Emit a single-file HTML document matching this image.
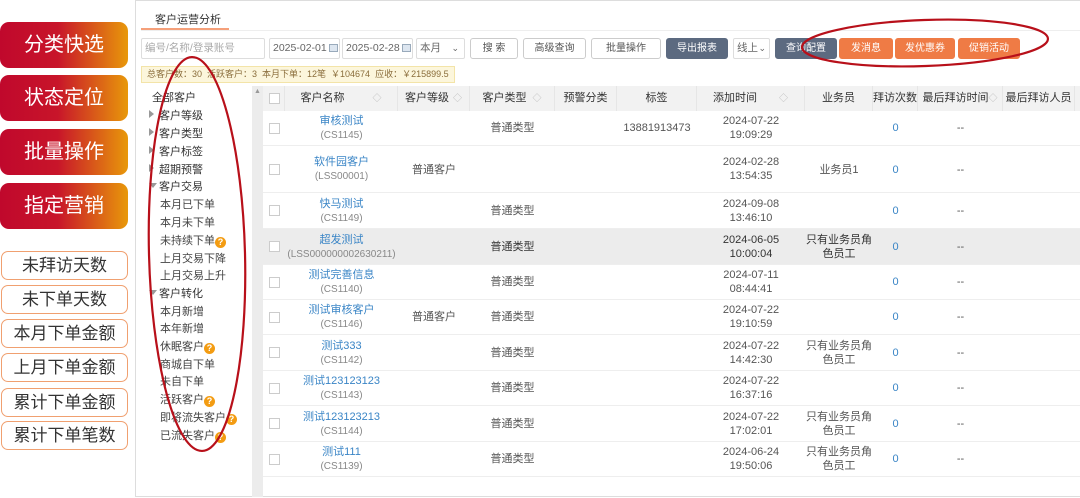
<!DOCTYPE html>
<html><head><meta charset="utf-8"><style>
*{margin:0;padding:0;box-sizing:border-box}
body{width:1080px;height:498px;background:#fff;position:relative;overflow:hidden;font-family:"Liberation Sans","Noto Sans CJK SC",sans-serif;font-size:11px;color:#555}
.a{position:absolute}
.rb{position:absolute;left:0;width:128px;height:46px;border-radius:9px;background:linear-gradient(90deg,#c0082c 0%,#c8152a 45%,#e8980a 100%);color:#fff;font-size:20px;text-align:center;line-height:46px}
.ob{position:absolute;left:1px;width:127px;height:29px;border:1px solid #f0a070;border-radius:7px;color:#333;font-size:17px;text-align:center;line-height:27px}
.inp{position:absolute;top:38px;height:21px;border:1px solid #ddd;border-radius:2px;background:#fff;color:#666;line-height:19px;padding-left:3px;white-space:nowrap;overflow:hidden;font-size:10.5px}
.btn{position:absolute;top:38px;height:21px;border:1px solid #ccc;border-radius:3px;background:#fff;color:#555;text-align:center;line-height:19px;font-size:10px;white-space:nowrap}
.dk{background:#5c6a80;color:#fff;border-color:#5c6a80}
.or{background:#ef7b45;color:#fff;border-color:#ef7b45}
.ti{position:absolute;left:160px;font-size:11px;color:#444;white-space:nowrap}
.tg{position:absolute;left:149px;font-size:11px;color:#333;white-space:nowrap}
.tg:before{content:"";position:absolute;left:0;top:3px;border-left:5px solid #999;border-top:4px solid transparent;border-bottom:4px solid transparent}
.tg.d:before{border-top:5px solid #999;border-left:4px solid transparent;border-right:4px solid transparent;border-bottom:0;top:5px}
.q{display:inline-block;width:11px;height:11px;border-radius:50%;background:#f39c12;color:#fff;font-size:9px;text-align:center;line-height:11px;font-weight:bold;vertical-align:-1px}
.row{position:absolute;left:263px;width:817px;border-bottom:1px solid #eee}
.c{position:absolute;text-align:center;line-height:14px;white-space:nowrap}
.cb{position:absolute;left:6px;width:11px;height:11px;border:1px solid #ccc;background:#fff}
.lk{color:#3a85c6}
.sm{color:#888;font-size:10px}
.h{position:absolute;top:0;height:25px;line-height:25px;text-align:center;color:#333;border-right:1px solid #e6e6e6;white-space:nowrap}
.s{display:inline-block;color:#bbb;font-size:9px;margin-left:6px}
.cal{display:inline-block;width:9px;height:8px;border:1px solid #9ab;background:#dde6f0;vertical-align:-1px;margin-left:2px}
</style></head><body>
<div class="rb" style="top:22px">分类快选</div>
<div class="rb" style="top:75px">状态定位</div>
<div class="rb" style="top:129px">批量操作</div>
<div class="rb" style="top:183px">指定营销</div>
<div class="ob" style="top:251px">未拜访天数</div>
<div class="ob" style="top:285px">未下单天数</div>
<div class="ob" style="top:319px">本月下单金额</div>
<div class="ob" style="top:353px">上月下单金额</div>
<div class="ob" style="top:388px">累计下单金额</div>
<div class="ob" style="top:421px">累计下单笔数</div>

<div class="a" style="left:135px;top:0;width:945px;height:497px;border:1px solid #ddd;border-right:0"></div>
<div class="a" style="left:155px;top:11px;font-size:11px;color:#333">客户运营分析</div>
<div class="a" style="left:141px;top:30px;width:939px;height:1px;background:#eee"></div>
<div class="a" style="left:141px;top:28px;width:88px;height:2px;background:#f5a07a"></div>

<div class="inp" style="left:141px;width:124px;color:#aaa">编号/名称/登录账号</div>
<div class="inp" style="left:269px;width:71px">2025-02-01<span class="cal"></span></div>
<div class="inp" style="left:342px;width:71px">2025-02-28<span class="cal"></span></div>
<div class="inp" style="left:416px;width:49px">本月 <span style="position:absolute;right:5px;font-size:9px">⌄</span></div>
<div class="btn" style="left:470px;width:48px">搜 索</div>
<div class="btn" style="left:523px;width:63px">高级查询</div>
<div class="btn" style="left:591px;width:70px">批量操作</div>
<div class="btn dk" style="left:666px;width:62px">导出报表</div>
<div class="inp" style="left:733px;width:37px">线上<span style="position:absolute;right:3px;font-size:9px">⌄</span></div>
<div class="btn dk" style="left:775px;width:62px">查询配置</div>
<div class="btn or" style="left:839px;width:54px">发消息</div>
<div class="btn or" style="left:895px;width:60px">发优惠券</div>
<div class="btn or" style="left:958px;width:62px">促销活动</div>

<div class="a" style="left:141px;top:66px;width:314px;height:17px;background:#fcf6dc;border:1px solid #f3e4a8;font-size:9px;color:#8a6d3b;line-height:15px;padding-left:5px;white-space:nowrap;overflow:hidden">总客户数：30&nbsp; 活跃客户：3&nbsp; 本月下单：12笔&nbsp; ￥104674&nbsp; 应收：￥215899.5</div>

<div class="a" style="left:152px;top:89px;color:#333">全部客户</div>
<div class="tg" style="top:107px"><span style="margin-left:10px">客户等级</span></div>
<div class="tg" style="top:125px"><span style="margin-left:10px">客户类型</span></div>
<div class="tg" style="top:143px"><span style="margin-left:10px">客户标签</span></div>
<div class="tg" style="top:161px"><span style="margin-left:10px">超期预警</span></div>
<div class="tg d" style="top:178px"><span style="margin-left:10px">客户交易</span></div>
<div class="ti" style="top:196px">本月已下单</div>
<div class="ti" style="top:214px">本月未下单</div>
<div class="ti" style="top:232px">未持续下单<span class="q">?</span></div>
<div class="ti" style="top:250px">上月交易下降</div>
<div class="ti" style="top:267px">上月交易上升</div>
<div class="tg d" style="top:285px"><span style="margin-left:10px">客户转化</span></div>
<div class="ti" style="top:303px">本月新增</div>
<div class="ti" style="top:320px">本年新增</div>
<div class="ti" style="top:338px">休眠客户<span class="q">?</span></div>
<div class="ti" style="top:356px">商城自下单</div>
<div class="ti" style="top:373px">未自下单</div>
<div class="ti" style="top:391px">活跃客户<span class="q">?</span></div>
<div class="ti" style="top:409px">即将流失客户<span class="q">?</span></div>
<div class="ti" style="top:427px">已流失客户<span class="q">?</span></div>

<div class="a" style="left:252px;top:86px;width:11px;height:411px;background:#ececec"></div>
<div class="a" style="left:254px;top:88px;font-size:7px;color:#999">▲</div>

<div class="a" style="left:263px;top:86px;width:817px;height:25px;background:#f2f2f2">
<div class="h" style="left:0;width:22px"><div class="cb" style="top:7px"></div></div>
<div class="h" style="left:22px;width:113px">客户名称<span class="s" style="margin-left:28px">◇</span></div>
<div class="h" style="left:135px;width:72px">客户等级<span class="s" style="margin-left:4px">◇</span></div>
<div class="h" style="left:207px;width:85px">客户类型<span class="s">◇</span></div>
<div class="h" style="left:292px;width:62px">预警分类</div>
<div class="h" style="left:354px;width:80px">标签</div>
<div class="h" style="left:434px;width:108px">添加时间<span class="s" style="margin-left:22px">◇</span></div>
<div class="h" style="left:542px;width:68px">业务员</div>
<div class="h" style="left:610px;width:45px">拜访次数</div>
<div class="h" style="left:655px;width:85px">最后拜访时间<span class="s" style="margin-left:0">◇</span></div>
<div class="h" style="left:740px;width:72px">最后拜访人员</div>
</div>

<div class="row" style="top:111px;height:35px"><div class="cb" style="top:12px"></div><div class="c lk" style="left:22px;width:113px;top:3px">审核测试<br><span class="sm">(CS1145)</span></div><div class="c" style="left:207px;width:85px;top:10px">普通类型</div><div class="c" style="left:354px;width:80px;top:10px">13881913473</div><div class="c" style="left:434px;width:108px;top:3px">2024-07-22<br>19:09:29</div><div class="c lk" style="left:610px;width:45px;top:10px">0</div><div class="c" style="left:655px;width:85px;top:10px">--</div></div>

<div class="row" style="top:146px;height:47px"><div class="cb" style="top:18px"></div><div class="c lk" style="left:22px;width:113px;top:9px">软件园客户<br><span class="sm">(LSS00001)</span></div><div class="c" style="left:135px;width:72px;top:17px">普通客户</div><div class="c" style="left:434px;width:108px;top:9px">2024-02-28<br>13:54:35</div><div class="c" style="left:542px;width:68px;top:17px">业务员1</div><div class="c lk" style="left:610px;width:45px;top:17px">0</div><div class="c" style="left:655px;width:85px;top:17px">--</div></div>

<div class="row" style="top:193px;height:36px"><div class="cb" style="top:12px"></div><div class="c lk" style="left:22px;width:113px;top:4px">快马测试<br><span class="sm">(CS1149)</span></div><div class="c" style="left:207px;width:85px;top:11px">普通类型</div><div class="c" style="left:434px;width:108px;top:4px">2024-09-08<br>13:46:10</div><div class="c lk" style="left:610px;width:45px;top:11px">0</div><div class="c" style="left:655px;width:85px;top:11px">--</div></div>

<div class="row" style="top:229px;height:36px;background:#ececec"><div class="cb" style="top:12px"></div><div class="c lk" style="left:22px;width:113px;top:4px">超发测试<br><span class="sm">(LSS000000002630211)</span></div><div class="c" style="left:207px;width:85px;top:11px;color:#333">普通类型</div><div class="c" style="left:434px;width:108px;top:4px;color:#333">2024-06-05<br>10:00:04</div><div class="c" style="left:542px;width:68px;top:4px;color:#333">只有业务员角<br>色员工</div><div class="c lk" style="left:610px;width:45px;top:11px">0</div><div class="c" style="left:655px;width:85px;top:11px">--</div></div>

<div class="row" style="top:265px;height:35px"><div class="cb" style="top:12px"></div><div class="c lk" style="left:22px;width:113px;top:3px">测试完善信息<br><span class="sm">(CS1140)</span></div><div class="c" style="left:207px;width:85px;top:10px">普通类型</div><div class="c" style="left:434px;width:108px;top:3px">2024-07-11<br>08:44:41</div><div class="c lk" style="left:610px;width:45px;top:10px">0</div><div class="c" style="left:655px;width:85px;top:10px">--</div></div>

<div class="row" style="top:300px;height:35px"><div class="cb" style="top:12px"></div><div class="c lk" style="left:22px;width:113px;top:3px">测试审核客户<br><span class="sm">(CS1146)</span></div><div class="c" style="left:135px;width:72px;top:10px">普通客户</div><div class="c" style="left:207px;width:85px;top:10px">普通类型</div><div class="c" style="left:434px;width:108px;top:3px">2024-07-22<br>19:10:59</div><div class="c lk" style="left:610px;width:45px;top:10px">0</div><div class="c" style="left:655px;width:85px;top:10px">--</div></div>

<div class="row" style="top:335px;height:36px"><div class="cb" style="top:12px"></div><div class="c lk" style="left:22px;width:113px;top:4px">测试333<br><span class="sm">(CS1142)</span></div><div class="c" style="left:207px;width:85px;top:11px">普通类型</div><div class="c" style="left:434px;width:108px;top:4px">2024-07-22<br>14:42:30</div><div class="c" style="left:542px;width:68px;top:4px">只有业务员角<br>色员工</div><div class="c lk" style="left:610px;width:45px;top:11px">0</div><div class="c" style="left:655px;width:85px;top:11px">--</div></div>

<div class="row" style="top:371px;height:35px"><div class="cb" style="top:12px"></div><div class="c lk" style="left:22px;width:113px;top:3px">测试123123123<br><span class="sm">(CS1143)</span></div><div class="c" style="left:207px;width:85px;top:10px">普通类型</div><div class="c" style="left:434px;width:108px;top:3px">2024-07-22<br>16:37:16</div><div class="c lk" style="left:610px;width:45px;top:10px">0</div><div class="c" style="left:655px;width:85px;top:10px">--</div></div>

<div class="row" style="top:406px;height:36px"><div class="cb" style="top:12px"></div><div class="c lk" style="left:22px;width:113px;top:4px">测试123123213<br><span class="sm">(CS1144)</span></div><div class="c" style="left:207px;width:85px;top:11px">普通类型</div><div class="c" style="left:434px;width:108px;top:4px">2024-07-22<br>17:02:01</div><div class="c" style="left:542px;width:68px;top:4px">只有业务员角<br>色员工</div><div class="c lk" style="left:610px;width:45px;top:11px">0</div><div class="c" style="left:655px;width:85px;top:11px">--</div></div>

<div class="row" style="top:442px;height:35px"><div class="cb" style="top:12px"></div><div class="c lk" style="left:22px;width:113px;top:3px">测试111<br><span class="sm">(CS1139)</span></div><div class="c" style="left:207px;width:85px;top:10px">普通类型</div><div class="c" style="left:434px;width:108px;top:3px">2024-06-24<br>19:50:06</div><div class="c" style="left:542px;width:68px;top:3px">只有业务员角<br>色员工</div><div class="c lk" style="left:610px;width:45px;top:10px">0</div><div class="c" style="left:655px;width:85px;top:10px">--</div></div>

<svg class="a" style="left:0;top:0" width="1080" height="498">
<ellipse cx="197" cy="254" rx="48" ry="197" fill="none" stroke="#b8101a" stroke-width="2.2" transform="rotate(-1.5 197 254)"/>
<ellipse cx="925" cy="43" rx="123" ry="23" fill="none" stroke="#b8101a" stroke-width="2.2" transform="rotate(-2 925 43)"/>
</svg>
</body></html>
